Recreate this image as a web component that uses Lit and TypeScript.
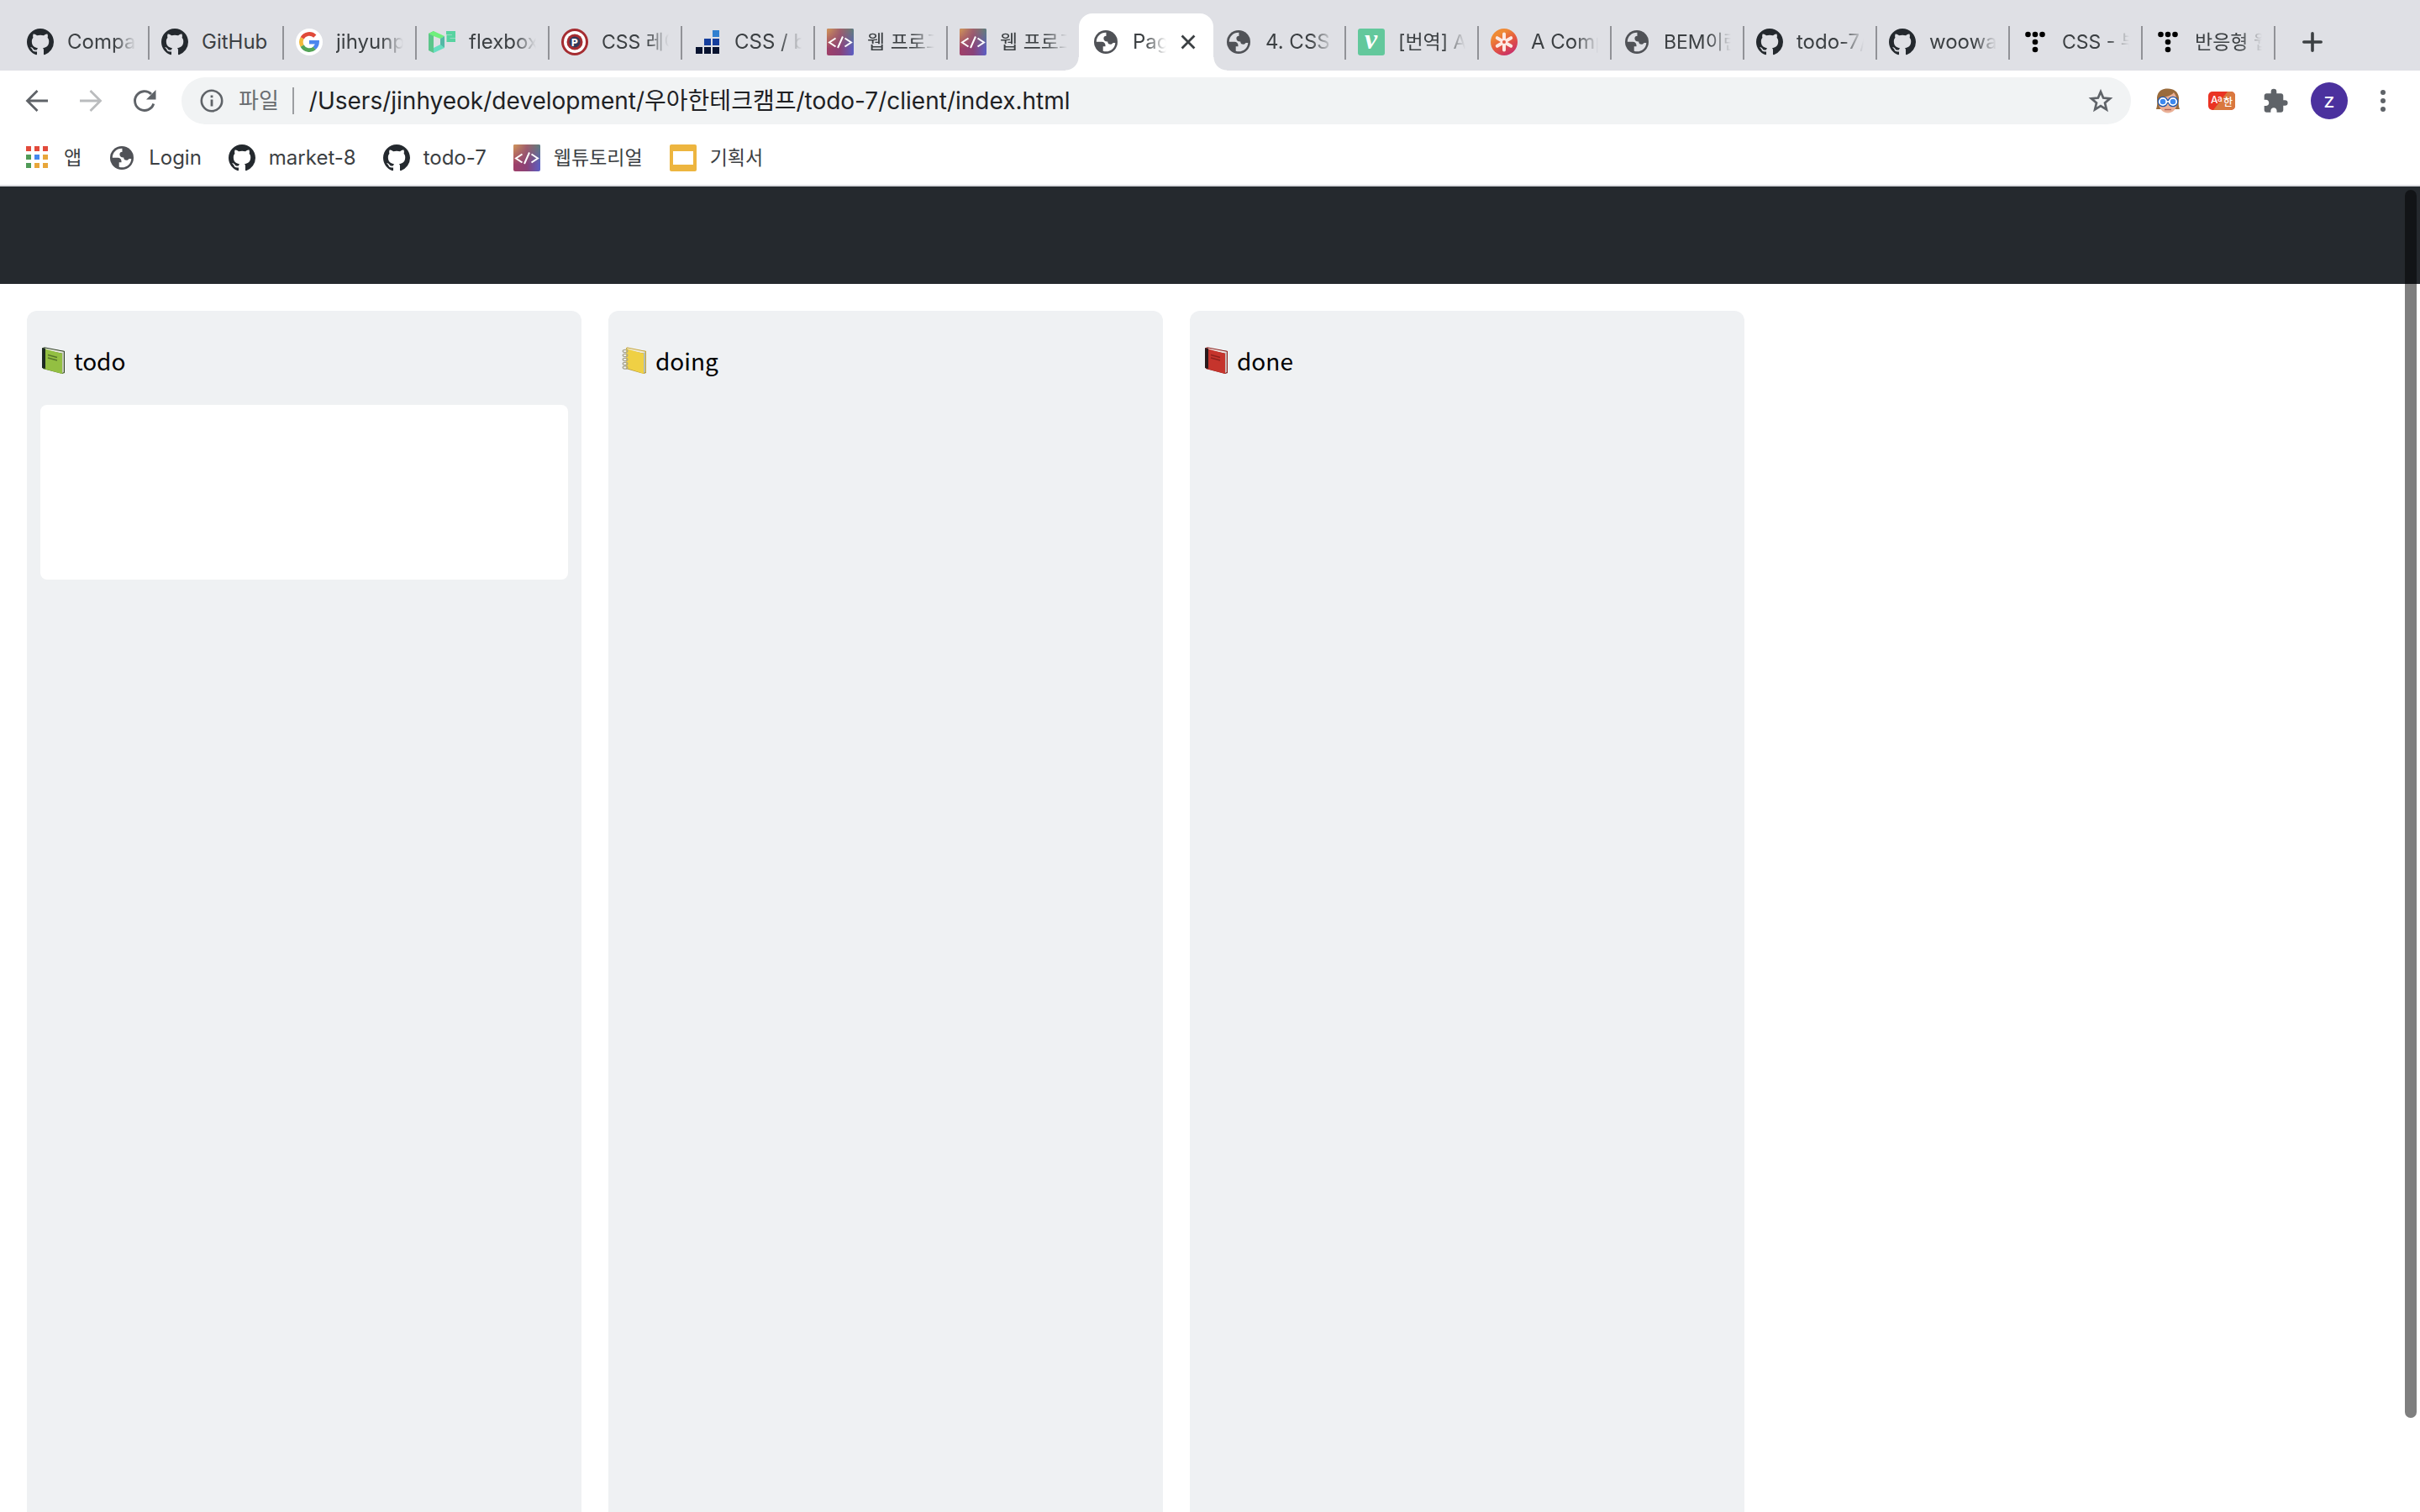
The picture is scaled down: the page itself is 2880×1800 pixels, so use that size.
import { LitElement, html, css, svg, nothing, TemplateResult } from "lit";
import { customElement, property } from "lit/decorators.js";
import { classMap } from "lit/directives/class-map.js";

const ICONS: Record<string, TemplateResult> = {
  github: svg`<path fill="#24292e" transform="scale(2)" d="M8 0C3.58 0 0 3.58 0 8c0 3.54 2.29 6.53 5.47 7.59.4.07.55-.17.55-.38 0-.19-.01-.82-.01-1.49-2.01.37-2.53-.49-2.69-.94-.09-.23-.48-.94-.82-1.13-.28-.15-.68-.52-.01-.53.63-.01 1.08.58 1.23.82.72 1.21 1.87.87 2.33.66.07-.52.28-.87.51-1.07-1.78-.2-3.64-.89-3.64-3.95 0-.87.31-1.59.82-2.15-.08-.2-.36-1.02.08-2.12 0 0 .67-.21 2.2.82.64-.18 1.32-.27 2-.27s1.36.09 2 .27c1.53-1.04 2.2-.82 2.2-.82.44 1.1.16 1.92.08 2.12.51.56.82 1.27.82 2.15 0 3.07-1.87 3.75-3.65 3.95.29.25.54.73.54 1.48 0 1.07-.01 1.93-.01 2.2 0 .21.15.46.55.38A8.01 8.01 0 0 0 16 8c0-4.42-3.58-8-8-8z"/>`,
  google: svg`<circle cx="16" cy="16" r="16" fill="#fff"/>
    <g fill="none" stroke-width="4.6">
      <path stroke="#e04a3a" d="M7.6 11.4A9.6 9.6 0 0 1 22.8 9.2"/>
      <path stroke="#f3b93b" d="M7.6 20.6a9.6 9.6 0 0 1 0-9.2"/>
      <path stroke="#53a457" d="M22.4 23.2A9.6 9.6 0 0 1 7.6 20.6"/>
      <path stroke="#4b86ee" d="M16 16.2h9.6a9.6 9.6 0 0 1-3.4 7"/>
    </g>`,
  d2: svg`<path fill="#5cc58a" d="M0 6 6 3v26l-6-3z"/><path fill="#6ff07c" d="M0 6 6 3l13 6-5 3-8-3z"/>
    <path fill="#54b8a6" d="M14 12l5-3v14l-5-3z"/><path fill="#67dfc0" d="M6 23l8-4 5 4-13 6z"/>
    <path fill="none" stroke="#57d3a0" stroke-width="4" d="M21 5h9v4.600h-6.500v4.500H32"/>`,
  shield: svg`<circle cx="16" cy="16" r="16" fill="#a52c31"/><circle cx="16" cy="16" r="13" fill="#fff"/>
    <circle cx="16" cy="16" r="9.500" fill="#a52c31"/><circle cx="16" cy="16" r="6.500" fill="#2f3a5c"/>
    <text x="16" y="20.500" text-anchor="middle" fill="#fff" font-family="Roboto, sans-serif" font-weight="900" font-size="12">P</text>`,
  stairs: svg`<path fill="#3180d0" d="M22 2h8v8h-8z"/><path fill="#153e9c" d="M12 12h8v8h-8zM22 12h8v8h-8z"/>
    <path fill="#08132f" d="M2 22h8v8H2zM12 22h8v8h-8zM22 22h8v8h-8z"/>`,
  code: svg`<defs>
      <linearGradient id="cg" x1="0" y1="0" x2="1" y2="0"><stop offset="0" stop-color="#a04068"/><stop offset=".5" stop-color="#8a4278"/><stop offset="1" stop-color="#5b5fc4"/></linearGradient>
      <linearGradient id="ct" x1="0" y1="0" x2="1" y2="0"><stop offset="0" stop-color="#d29a58"/><stop offset=".5" stop-color="#a0626c"/><stop offset="1" stop-color="#5e7f78"/></linearGradient>
      <linearGradient id="cm" x1="0" y1="0" x2="0" y2="1"><stop offset="0" stop-color="#fff"/><stop offset=".75" stop-color="#000"/></linearGradient>
      <mask id="ck"><rect width="32" height="32" fill="url(#cm)"/></mask>
    </defs>
    <rect width="32" height="32" rx="2" fill="url(#cg)"/><rect width="32" height="32" rx="2" fill="url(#ct)" mask="url(#ck)"/>
    <path fill="none" stroke="#fff" stroke-width="2" d="M10.500 11.500 3 16.500l7.500 5M21.500 11.500l7.500 5-7.500 5M19 9.500l-6 13.500"/>`,
  globe: svg`<circle cx="16" cy="16" r="14" fill="#505257"/>
    <path fill="#dfe0e5" class="sea" d="M16.500 4.800C10 4.500 4.800 9.500 4.800 15.800h6.400c2.600 0 4.300 1.700 4.300 4.200v1.200h-2.800v5.500c6.800 2.400 14.200-2.300 14.600-9.700h-2.800c-.6 1.200-1.600 1.800-3 1.800-2.200 0-3.300-1.300-3.300-3.300-2.900.2-4.800-1.200-4.800-3.800 0-1.800 1.200-2.900 3.100-2.900V7.500c0-1.100-.2-1.900 0-2.700z"/>`,
  velog: svg`<rect width="32" height="32" rx="3" fill="#63c89c"/>
    <text x="15.500" y="23.500" text-anchor="middle" fill="#fff" font-family="Liberation Serif, serif" font-weight="700" font-style="italic" font-size="34">v</text>`,
  star6: svg`<defs><linearGradient id="sg" x1=".2" y1="0" x2=".8" y2="1"><stop offset=".2" stop-color="#ef8a35"/><stop offset=".55" stop-color="#e4573f"/><stop offset="1" stop-color="#c42a72"/></linearGradient></defs>
    <circle cx="16" cy="16" r="16" fill="url(#sg)"/>
    <path stroke="#fce9e4" stroke-width="4" stroke-linecap="round" d="M16 6.500v19M7.800 11.200l16.400 9.600M24.200 11.200 7.800 20.800"/>
    <circle cx="16" cy="16" r="2" fill="#e4573f"/>`,
  dots: svg`<g fill="#000"><circle cx="7.500" cy="7" r="3.300"/><circle cx="16" cy="7" r="3.300"/><circle cx="24.500" cy="7" r="3.300"/><circle cx="16" cy="16" r="3.300"/><circle cx="16" cy="25" r="3.300"/></g>`,
  apps: svg`<path fill="#e24a3b" d="M3 2h6v6H3zM13 2h6v6h-6zM23 2h6v6h-6z"/><path fill="#509b57" d="M3 12h6v6H3zM3 22h6v6H3z"/>
    <path fill="#4488ee" d="M13 12h6v6h-6z"/><path fill="#e8a63a" d="M23 12h6v6h-6zM13 22h6v6h-6zM23 22h6v6h-6z"/>`,
  slides: svg`<rect width="32" height="32" rx="2" fill="#edb53f"/><path fill="#fff" d="M4 8h24v16H4z"/>`,
  back: svg`<path fill="none" stroke="#5f6368" stroke-width="2.800" d="M29 16H5M16.500 4 4.500 16l12 12"/>`,
  forward: svg`<path fill="none" stroke="#babcbe" stroke-width="2.800" d="M3 16h24M15.500 4l12 12-12 12"/>`,
  reload: svg`<path fill="none" stroke="#5f6368" stroke-width="2.900" d="M26.800 19.500A11.400 11.400 0 1 1 24 8"/><path fill="#5f6368" d="M29.500 3v11.500H18z"/>`,
  info: svg`<circle cx="16" cy="16" r="12.200" fill="none" stroke="#5f6368" stroke-width="2.600"/><path fill="#5f6368" d="M14.600 9.500h2.800v2.800h-2.800zM14.600 14.600h2.800v8h-2.800z"/>`,
  bookmark: svg`<path fill="none" stroke="#5f6368" stroke-width="2.700" d="M16 5.200l3.100 7.400 8 .7-6.100 5.200 1.900 7.800-6.900-4.200-6.900 4.200 1.900-7.800-6.100-5.200 8-.7z"/>`,
  person: svg`<path fill="#9a6b3c" d="M3 12C4 4 9 1.500 16 1.500S28 5 29 12c0 6-1 8 1 14H2c2-6 1-8 1-14z"/>
    <path fill="#eab096" d="M5 13c4-1 15-2 18-7 2 3 4 6 4 12 0 7-5 12.500-11 12.500S5 25 5 18z"/>
    <circle cx="10" cy="17" r="6.300" fill="#1b55ad"/><circle cx="22" cy="17" r="6.300" fill="#1b55ad"/>
    <circle cx="10" cy="17" r="4.200" fill="#3c88f0" stroke="#fff" stroke-width="1.800"/><circle cx="22" cy="17" r="4.200" fill="#3c88f0" stroke="#fff" stroke-width="1.800"/>
    <path stroke="#fff" stroke-width="1.600" d="M14 17h4"/><path stroke="#b3645a" stroke-width="1.400" d="M12 26.500h8"/>`,
  translate: svg`<rect y="5" width="32" height="22" rx="5" fill="#ea3323"/><path fill="#d9783f" d="M23 5h4a5 5 0 0 1 5 5v12a5 5 0 0 1-5 5H6z"/>
    <g fill="#fff" font-family="Inter, Noto Sans CJK KR, sans-serif" font-weight="500"><text x="3" y="19" font-size="12">A</text><text x="11" y="17" font-size="10">a</text><text x="18" y="22" font-size="12">한</text></g>`,
  puzzle: svg`<path fill="#5f6368" transform="translate(0 .5) scale(1.330)" d="M20.500 11H19V7c0-1.100-.9-2-2-2h-4V3.500a2.500 2.500 0 0 0-5 0V5H4c-1.100 0-1.990.9-1.990 2v3.800H3.500c1.490 0 2.700 1.210 2.700 2.700s-1.210 2.700-2.700 2.700H2V20c0 1.100.9 2 2 2h3.800v-1.500c0-1.490 1.210-2.700 2.700-2.700s2.700 1.210 2.700 2.700V22H17c1.100 0 2-.9 2-2v-4h1.500a2.500 2.500 0 0 0 0-5z"/>`,
  menu: svg`<g fill="#5f6368"><circle cx="16" cy="6" r="3"/><circle cx="16" cy="16" r="3"/><circle cx="16" cy="26" r="3"/></g>`,
  close: svg`<path stroke="#3c4043" stroke-width="3.200" d="M7.500 7.500l17 17M24.500 7.500l-17 17"/>`,
  plus: svg`<path stroke="#3c4043" stroke-width="3.600" stroke-linecap="round" d="M16 5.800v20.400M5.800 16h20.400"/>`,
  greenBook: svg`<path fill="#4f6b2c" d="M3 1 29 5v26l-3 1L3 26z"/><path fill="#e8eadf" d="M5 1l23 4v3L7 4z"/><path fill="#c4c9ba" d="M26 7l2-1v24l-2 1z"/>
    <path fill="#93bf42" d="M4 2l22 6v24L4 26z"/><path fill="#1d2a22" d="M2 1l4 1v24l-4-1z"/><path stroke="#55752a" stroke-width="1.300" d="M9 9.500l11 3M9 13l11 3"/><path fill="none" stroke="#314226" d="M3 1.500 5 .8l23.500 4.600v25"/>`,
  yellowBook: svg`<path fill="#b0963a" d="M5 1 29 5v26l-3 1L5 26z"/><path fill="#eeeada" d="M6 1l22 4v3L7 4z"/><path fill="#b4beb4" d="M26 7l2-1v24l-2 1z"/>
    <path fill="#efd044" d="M5 2l21 6v24L5 25z"/><path fill="none" stroke="#c9a93c" d="M6 .8l22.500 4.600v25"/>
    <g fill="none" stroke="#a8a48e" stroke-width="1.300"><ellipse cx="4" cy="5" rx="2.800" ry="1.700"/><ellipse cx="4" cy="10" rx="2.800" ry="1.700"/><ellipse cx="4" cy="15" rx="2.800" ry="1.700"/><ellipse cx="4" cy="20" rx="2.800" ry="1.700"/><ellipse cx="4" cy="24.500" rx="2.800" ry="1.700"/></g>`,
  redBook: svg`<path fill="#7c1d1a" d="M3 1 29 5v26l-3 1L3 26z"/><path fill="#efe3e1" d="M5 1l23 4v3L7 4z"/><path fill="#c9bcba" d="M26 7l2-1v24l-2 1z"/>
    <path fill="#c5342c" d="M4 2l22 6v24L4 26z"/><path fill="#2a1a1c" d="M2 1l4 1v24l-4-1z"/><path stroke="#8d211d" stroke-width="1.300" d="M9 9.500l11 3M9 13l11 3"/><path fill="none" stroke="#8d211d" d="M3 1.500 5 .8l23.500 4.600v25"/>`,
};

const icon = (name: string) =>
  html`<svg class="icon" viewBox="0 0 32 32" aria-hidden="true">${ICONS[name]}</svg>`;

const hasHangul = (text: string) => /[가-힣]/.test(text);

interface Tab {
  icon: string;
  title: string;
  fits?: boolean;
  active?: boolean;
}

const TABS: Tab[] = [
  { icon: "github", title: "Compar" },
  { icon: "github", title: "GitHub", fits: true },
  { icon: "google", title: "jihyunpark" },
  { icon: "d2", title: "flexbox" },
  { icon: "shield", title: "CSS 레이아웃" },
  { icon: "stairs", title: "CSS / box" },
  { icon: "code", title: "웹 프로그래밍" },
  { icon: "code", title: "웹 프로그래밍" },
  { icon: "globe", title: "Page", active: true },
  { icon: "globe", title: "4. CSS 3" },
  { icon: "velog", title: "[번역] A" },
  { icon: "star6", title: "A Compl" },
  { icon: "globe", title: "BEM이란" },
  { icon: "github", title: "todo-7/" },
  { icon: "github", title: "woowa" },
  { icon: "dots", title: "CSS - 부" },
  { icon: "dots", title: "반응형 웹" },
];

const BOOKMARKS = [
  { icon: "apps", label: "앱" },
  { icon: "globe", label: "Login" },
  { icon: "github", label: "market-8" },
  { icon: "github", label: "todo-7" },
  { icon: "code", label: "웹튜토리얼" },
  { icon: "slides", label: "기획서" },
];

const uiFont = css`
  :host {
    box-sizing: border-box;
    font-family: Inter, "Noto Sans CJK KR", sans-serif;
    font-size: 24px;
    line-height: 32px;
    color: #3c4043;
  }
  * {
    box-sizing: border-box;
  }
  button,
  input {
    font: inherit;
    color: inherit;
    background: none;
    border: 0;
    padding: 0;
    margin: 0;
  }
  .icon {
    display: block;
    flex: none;
    width: 32px;
    height: 32px;
  }
  .hangul {
    font-size: 23px;
  }
`;

@customElement("tab-strip")
export class TabStrip extends LitElement {
  static styles = [
    uiFont,
    css`
      :host {
        display: flex;
        align-items: flex-end;
        height: 84px;
        padding-left: 18px;
        background: #dfe0e5;
      }
      .tab {
        position: relative;
        display: flex;
        align-items: center;
        flex: 0 1 158px;
        min-width: 0;
        height: 68px;
        padding-right: 16px;
      }
      /* Leftover width goes to the leading tabs. */
      .tab:nth-child(-n + 2) {
        flex-basis: 160px;
      }
      .tab::after {
        content: "";
        position: absolute;
        right: 0;
        top: 15px;
        width: 2px;
        height: 40px;
        background: #919297;
      }
      .before-active::after {
        display: none;
      }
      .pick {
        display: flex;
        align-items: center;
        flex: 1;
        gap: 16px;
        min-width: 0;
        height: 100%;
        padding-left: 14px;
        text-align: left;
      }
      .title {
        flex: 1;
        min-width: 0;
        overflow: hidden;
        white-space: nowrap;
      }
      .fade {
        mask-image: linear-gradient(to left, transparent, #000 26px);
      }
      .active {
        flex-basis: 160px;
        margin-left: -2px;
        background: #fff;
        border-radius: 16px 16px 0 0;
      }
      .active .pick {
        padding-left: 16px;
      }
      .active .sea {
        fill: #fff;
      }
      .active::after,
      .active::before {
        content: "";
        position: absolute;
        top: auto;
        bottom: 0;
        width: 16px;
        height: 16px;
      }
      .active::before {
        left: -16px;
        background: radial-gradient(circle at 0 0, transparent 15px, #fff 16px);
      }
      .active::after {
        right: -16px;
        background: radial-gradient(circle at 100% 0, transparent 15px, #fff 16px);
      }
      .close {
        margin-left: 12px;
      }
      .close .icon {
        width: 28px;
        height: 28px;
      }
      .new {
        display: flex;
        align-items: center;
        height: 68px;
        padding: 0 28px;
      }
    `,
  ];

  @property({ attribute: false }) tabs: Tab[] = [];

  render() {
    return html`${this.tabs.map(
        (t, i) => html`<div
          class=${classMap({
            tab: true,
            active: !!t.active,
            "before-active": !!this.tabs[i + 1]?.active,
          })}
        >
          <button class="pick">
            ${icon(t.icon)}
            <span class=${classMap({ title: true, fade: !t.fits, hangul: hasHangul(t.title) })}
              >${t.title}</span
            >
          </button>
          ${t.active
            ? html`<button class="close" aria-label="탭 닫기">${icon("close")}</button>`
            : nothing}
        </div>`
      )}
      <button class="new" aria-label="새 탭">${icon("plus")}</button>`;
  }
}

@customElement("tool-bar")
export class ToolBar extends LitElement {
  static styles = [
    uiFont,
    css`
      :host {
        display: flex;
        align-items: center;
        gap: 12px;
        padding: 8px 12px 0;
        background: #fff;
      }
      .group {
        display: flex;
      }
      .tool {
        display: flex;
        align-items: center;
        justify-content: center;
        width: 64px;
        height: 56px;
      }
      .omnibox {
        display: flex;
        align-items: center;
        flex: 1;
        min-width: 0;
        height: 56px;
        padding: 0 20px;
        border-radius: 28px;
        background: #f1f3f4;
        font-size: 28px;
      }
      .scheme {
        display: flex;
        align-items: center;
        gap: 16px;
        font-size: 26px;
        color: #6a6d71;
      }
      .divider {
        width: 2px;
        height: 32px;
        margin: 0 18px 0 16px;
        background: #9c9ea1;
      }
      .url {
        flex: 1;
        min-width: 0;
        color: #202124;
        outline: none;
      }
      .avatar {
        display: grid;
        place-items: center;
        width: 44px;
        height: 44px;
        border-radius: 50%;
        background: #4b319e;
        color: #fff;
      }
    `,
  ];

  render() {
    return html`
      <div class="group">
        <button class="tool" aria-label="뒤로">${icon("back")}</button>
        <button class="tool" aria-label="앞으로">${icon("forward")}</button>
        <button class="tool" aria-label="새로고침">${icon("reload")}</button>
      </div>
      <div class="omnibox">
        <label class="scheme" for="url">${icon("info")}<span>파일</span></label>
        <span class="divider"></span>
        <input
          id="url"
          class="url"
          type="text"
          spellcheck="false"
          value="/Users/jinhyeok/development/우아한테크캠프/todo-7/client/index.html"
        />
        <button aria-label="북마크">${icon("bookmark")}</button>
      </div>
      <div class="group">
        <button class="tool" aria-label="확장 프로그램 1">${icon("person")}</button>
        <button class="tool" aria-label="번역">${icon("translate")}</button>
        <button class="tool" aria-label="확장 프로그램">${icon("puzzle")}</button>
        <button class="tool"><span class="avatar">z</span></button>
        <button class="tool" aria-label="메뉴">${icon("menu")}</button>
      </div>
    `;
  }
}

@customElement("bookmark-bar")
export class BookmarkBar extends LitElement {
  static styles = [
    uiFont,
    css`
      :host {
        display: block;
        background: #fff;
        border-bottom: 2px solid #dcdde1;
      }
      .list {
        display: flex;
        align-items: center;
        gap: 32px;
        height: 72px;
        padding: 8px 28px 0;
      }
      .link {
        display: flex;
        align-items: center;
        gap: 16px;
        color: inherit;
        text-decoration: none;
        white-space: nowrap;
      }
      .sea {
        fill: #fff;
      }
    `,
  ];

  render() {
    return html`<nav class="list">
      ${BOOKMARKS.map(
        (b) => html`<a class="link" href="#"
          >${icon(b.icon)}<span class=${classMap({ hangul: hasHangul(b.label) })}
            >${b.label}</span
          ></a
        >`
      )}
    </nav>`;
  }
}

@customElement("todo-column")
export class TodoColumn extends LitElement {
  static styles = [
    uiFont,
    css`
      :host {
        flex: 0 1 660px;
        min-width: 0;
        padding: 16px;
        border-radius: 12px 12px 0 0;
        background: #eff1f3;
      }
      .heading {
        display: flex;
        align-items: center;
        gap: 8px;
        height: 88px;
        margin: 0 0 8px;
        padding-bottom: 2px;
        font: 400 28px/40px "Noto Sans CJK KR", sans-serif;
        color: #000;
      }
      .card {
        height: 208px;
        border-radius: 8px;
        background: #fff;
      }
    `,
  ];

  @property() name = "";
  @property() book = "";
  @property({ type: Number }) cards = 0;

  render() {
    return html`
      <h2 class="heading">${icon(this.book)}<span>${this.name}</span></h2>
      ${Array.from({ length: this.cards }, () => html`<article class="card"></article>`)}
    `;
  }
}

@customElement("app-root")
export class AppRoot extends LitElement {
  static styles = css`
    :host {
      display: flex;
      flex-direction: column;
      height: 100vh;
      overflow: hidden;
      background: #fff;
    }
    .page {
      position: relative;
      display: flex;
      flex-direction: column;
      flex: 1;
      min-height: 0;
    }
    .banner {
      height: 116px;
      background: #25292e;
    }
    .board {
      display: flex;
      flex: 1;
      gap: 32px;
      padding: 32px 32px 0;
    }
    .thumb {
      position: absolute;
      top: 4px;
      right: 4px;
      bottom: 112px;
      width: 14px;
      border-radius: 7px;
      background: rgba(0, 0, 0, 0.5);
    }
  `;

  render() {
    return html`
      <tab-strip .tabs=${TABS}></tab-strip>
      <tool-bar></tool-bar>
      <bookmark-bar></bookmark-bar>
      <div class="page">
        <header class="banner"></header>
        <main class="board">
          <todo-column name="todo" book="greenBook" cards="1"></todo-column>
          <todo-column name="doing" book="yellowBook"></todo-column>
          <todo-column name="done" book="redBook"></todo-column>
        </main>
        <div class="thumb"></div>
      </div>
    `;
  }
}
